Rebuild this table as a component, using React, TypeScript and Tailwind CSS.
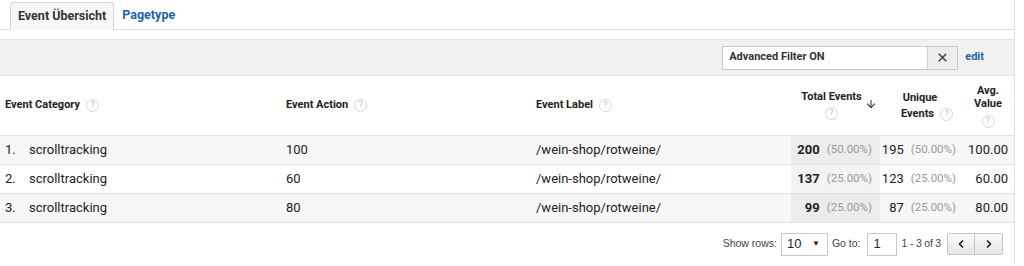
import { ChevronLeft, ChevronRight, ArrowDown, X } from 'lucide-react';

type Row = {
  category: string;
  action: string;
  label: string;
  total: number;
  totalPct: string;
  unique: number;
  uniquePct: string;
  avg: string;
};

const rows: Row[] = [
  { category: 'scrolltracking', action: '100', label: '/wein-shop/rotweine/', total: 200, totalPct: '(50.00%)', unique: 195, uniquePct: '(50.00%)', avg: '100.00' },
  { category: 'scrolltracking', action: '60', label: '/wein-shop/rotweine/', total: 137, totalPct: '(25.00%)', unique: 123, uniquePct: '(25.00%)', avg: '60.00' },
  { category: 'scrolltracking', action: '80', label: '/wein-shop/rotweine/', total: 99, totalPct: '(25.00%)', unique: 87, uniquePct: '(25.00%)', avg: '80.00' },
];

const cols = 'grid grid-cols-[281px_250px_260px_89px_80px_55px]';

function Help() {
  return (
    <span className="inline-flex h-[13px] w-[13px] items-center justify-center rounded-full border border-[#d6d6d6] text-[9px] font-normal leading-none text-[#c4c4c4]">
      ?
    </span>
  );
}

export default function App() {
  return (
    <div className="h-[266px] w-[1024px] bg-white font-['Roboto',sans-serif] text-[#222]">
      <div className="w-[1015px] border-r border-[#e3e3e3]">
        {/* Tabs */}
        <div className="flex h-[30px] items-end border-b border-[#d9d9d9] pl-[10px]">
          <div className="-mb-px flex h-[28px] items-center rounded-t-[3px] border border-b-0 border-[#d4d4d4] bg-[#f7f7f7] px-[7px] text-[12.5px] font-bold text-[#333]">
            Event Übersicht
          </div>
          <div className="flex h-[28px] items-center px-[8px] text-[12.5px] font-bold text-[#1b64a9]">Pagetype</div>
        </div>

        {/* Filter bar */}
        <div className="mt-[9px] flex h-[37px] items-center justify-end border-y border-[#e2e2e2] bg-[#f1f1f1] pr-[30px]">
          <div className="flex h-[24px] w-[236px] border border-[#c9c9c9] bg-white">
            <div className="flex flex-1 items-center pl-[6px] text-[11px] font-bold text-[#333]">Advanced Filter ON</div>
            <div className="flex w-[30px] items-center justify-center border-l border-[#d0d0d0] bg-[#ededed]">
              <X className="h-[13px] w-[13px] text-[#444]" strokeWidth={3} />
            </div>
          </div>
          <span className="ml-[7px] text-[11px] font-bold text-[#1b64a9]">edit</span>
        </div>

        {/* Header */}
        <div className={`${cols} h-[60px] border-b border-[#e2e2e2] text-[11px] font-bold text-[#222]`}>
          <div className="flex items-center gap-[6px] pl-[5px]">
            Event Category <Help />
          </div>
          <div className="flex items-center gap-[6px] pl-[5px]">
            Event Action <Help />
          </div>
          <div className="flex items-center gap-[6px] pl-[5px]">
            Event Label <Help />
          </div>
          <div className="relative flex flex-col items-center pt-[14px] pr-[8px] leading-[14px]">
            <span>Total Events</span>
            <span className="mt-[2px]"><Help /></span>
            <ArrowDown className="absolute right-[3px] top-[22px] h-[12px] w-[12px] text-[#555]" strokeWidth={2.5} />
          </div>
          <div className="flex flex-col items-center pt-[15px] leading-[14px]">
            <span>Unique</span>
            <span className="mt-[2px] flex items-center gap-[6px] pl-[14px]">
              Events <Help />
            </span>
          </div>
          <div className="flex flex-col items-end pr-[7px] pt-[8px] leading-[13px]">
            <span className="w-[40px] text-center">Avg.</span>
            <span className="w-[40px] text-center">Value</span>
            <span className="mt-[5px] flex w-[40px] justify-center"><Help /></span>
          </div>
        </div>

        {/* Rows */}
        {rows.map((r, i) => (
          <div
            key={i}
            className={`${cols} h-[29px] border-b border-[#e2e2e2] text-[13px] text-[#222] ${i % 2 === 0 ? 'bg-[#f7f7f7]' : 'bg-white'}`}
          >
            <div className="flex items-center pl-[5px]">
              <span className="w-[24px]">{i + 1}.</span>
              {r.category}
            </div>
            <div className="flex items-center pl-[5px]">{r.action}</div>
            <div className="flex items-center pl-[5px]">{r.label}</div>
            <div className={`flex items-center justify-end pr-[8px] ${i % 2 === 0 ? 'bg-[#ececec]' : 'bg-[#f3f3f3]'}`}>
              <span className="font-bold">{r.total}</span>
              <span className="ml-[7px] text-[11.5px] text-[#999]">{r.totalPct}</span>
            </div>
            <div className="flex items-center justify-end pr-[4px]">
              <span>{r.unique}</span>
              <span className="ml-[7px] text-[11.5px] text-[#999]">{r.uniquePct}</span>
            </div>
            <div className="flex items-center justify-end pr-[7px]">{r.avg}</div>
          </div>
        ))}

        {/* Pagination */}
        <div className="flex h-[42px] items-center justify-end pr-[11px] font-['Liberation_Sans',Arial,sans-serif] text-[10.5px] text-[#444]">
          <span>Show rows:</span>
          <div className="ml-[4px] flex h-[23px] w-[47px] items-center justify-between border border-[#c9c9c9] bg-white pl-[5px] pr-[7px] text-[13px] text-[#222]">
            <span>10</span>
            <span className="text-[8px]">▼</span>
          </div>
          <span className="ml-[4px]">Go to:</span>
          <div className="ml-[6px] flex h-[23px] w-[30px] items-center border border-[#c9c9c9] bg-white pl-[6px] text-[13px] text-[#1a2a4a]">1</div>
          <span className="ml-[5px] tracking-[-0.2px]">1 - 3 of 3</span>
          <div className="ml-[6px] flex h-[22px] overflow-hidden rounded-[2px] border border-[#c6c6c6] bg-gradient-to-b from-[#fafafa] to-[#e6e6e6]">
            <div className="flex w-[27px] items-center justify-center border-r border-[#c6c6c6]">
              <ChevronLeft className="h-[12px] w-[12px] text-[#222]" strokeWidth={3.5} />
            </div>
            <div className="flex w-[27px] items-center justify-center">
              <ChevronRight className="h-[12px] w-[12px] text-[#222]" strokeWidth={3.5} />
            </div>
          </div>
        </div>
      </div>
    </div>
  );
}
